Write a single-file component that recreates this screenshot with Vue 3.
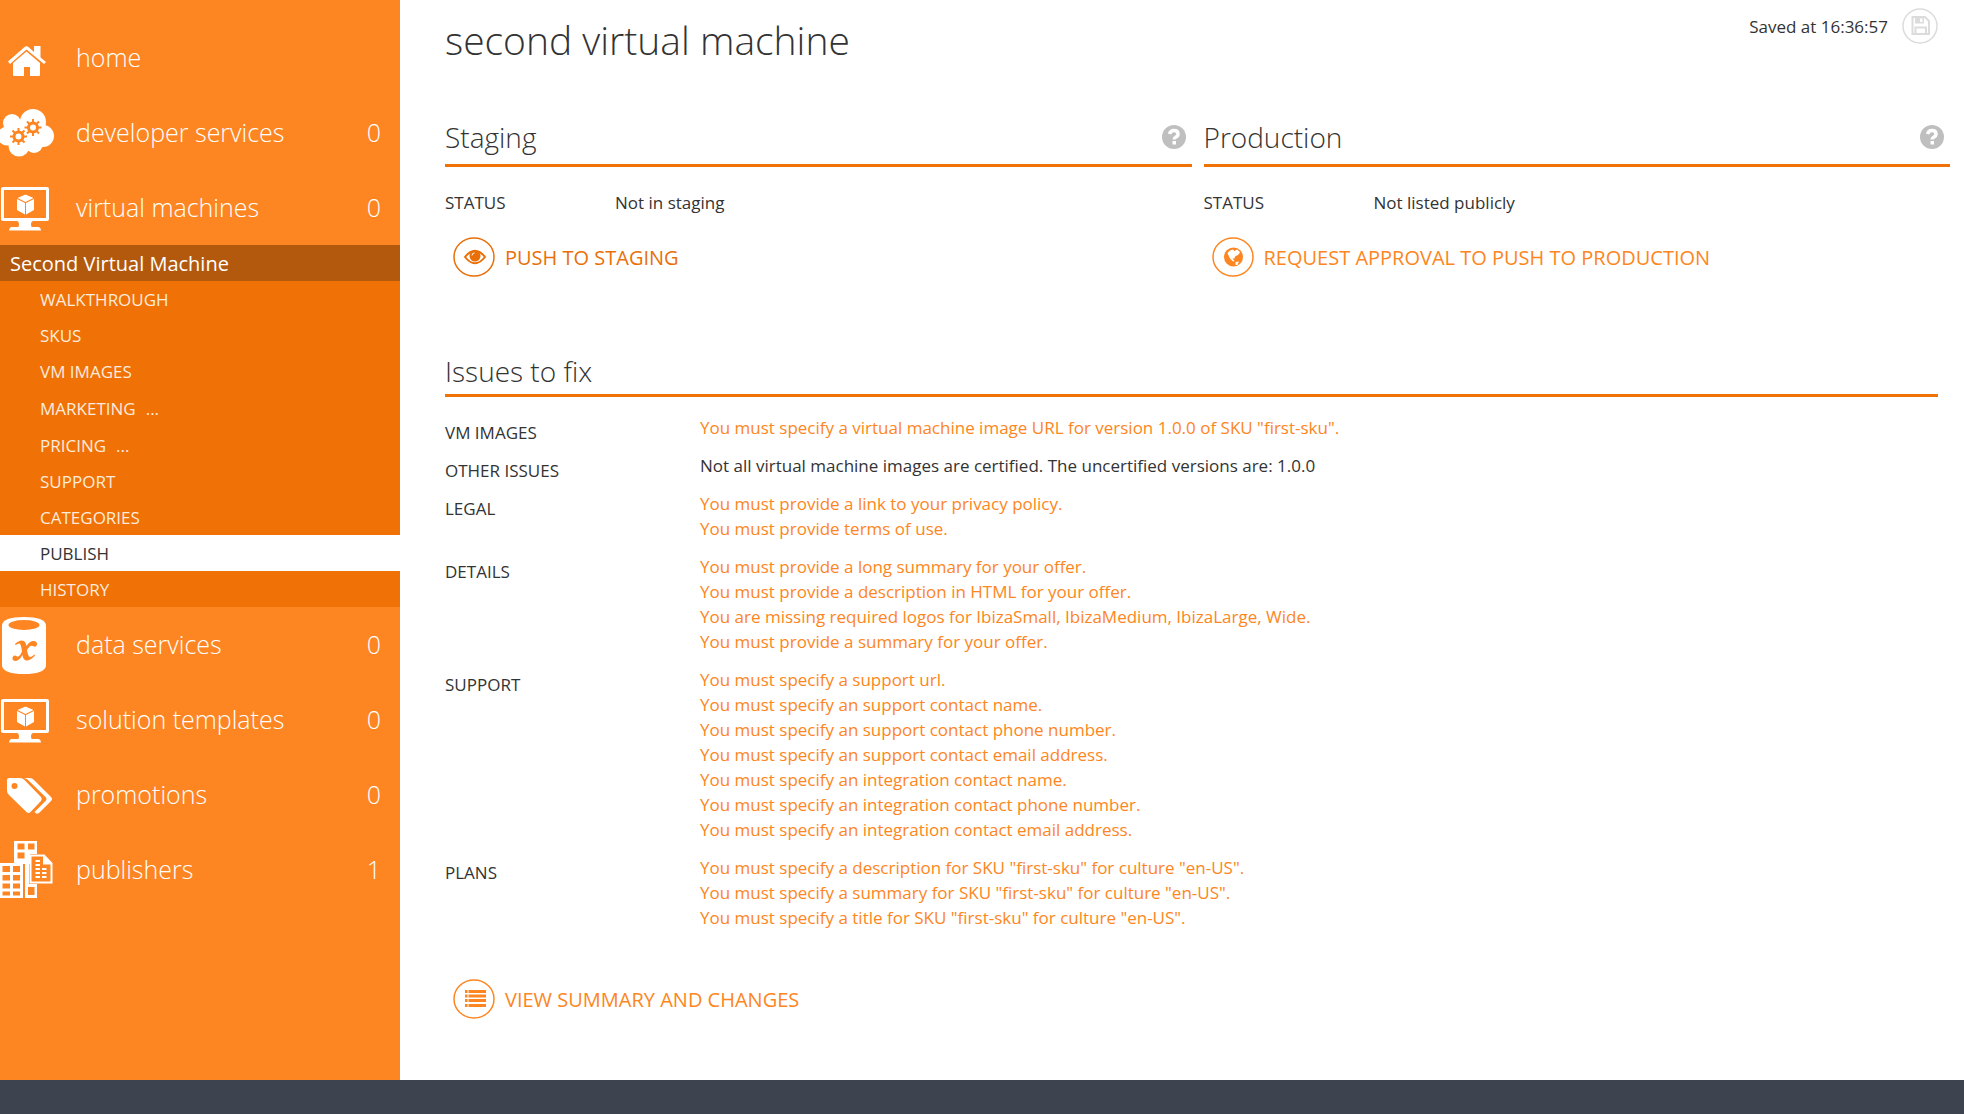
<script setup>
const before = [
  { label: 'home', icon: 'home' },
  { label: 'developer services', icon: 'cloud', count: 0 },
  { label: 'virtual machines', icon: 'monitor', count: 0 },
]
const after = [
  { label: 'data services', icon: 'data', count: 0 },
  { label: 'solution templates', icon: 'monitor', count: 0 },
  { label: 'promotions', icon: 'tags', count: 0 },
  { label: 'publishers', icon: 'publishers', count: 1 },
]
const sub = [
  { label: 'WALKTHROUGH' },
  { label: 'SKUS' },
  { label: 'VM IMAGES' },
  { label: 'MARKETING', more: true },
  { label: 'PRICING', more: true },
  { label: 'SUPPORT' },
  { label: 'CATEGORIES' },
  { label: 'PUBLISH', active: true },
  { label: 'HISTORY' },
]
const nav = [
  { key: 'top', items: before },
  { key: 'bottom', items: after },
]
const stages = [
  { title: 'Staging', status: 'Not in staging', action: 'PUSH TO STAGING', icon: 'eye', strong: true },
  { title: 'Production', status: 'Not listed publicly', action: 'REQUEST APPROVAL TO PUSH TO PRODUCTION', icon: 'globe' },
]
const issues = [
  { name: 'VM IMAGES', lines: ['You must specify a virtual machine image URL for version 1.0.0 of SKU "first-sku".'] },
  { name: 'OTHER ISSUES', plain: true, lines: ['Not all virtual machine images are certified. The uncertified versions are: 1.0.0'] },
  { name: 'LEGAL', lines: ['You must provide a link to your privacy policy.', 'You must provide terms of use.'] },
  {
    name: 'DETAILS',
    lines: [
      'You must provide a long summary for your offer.',
      'You must provide a description in HTML for your offer.',
      'You are missing required logos for IbizaSmall, IbizaMedium, IbizaLarge, Wide.',
      'You must provide a summary for your offer.',
    ],
  },
  {
    name: 'SUPPORT',
    lines: [
      'You must specify a support url.',
      'You must specify an support contact name.',
      'You must specify an support contact phone number.',
      'You must specify an support contact email address.',
      'You must specify an integration contact name.',
      'You must specify an integration contact phone number.',
      'You must specify an integration contact email address.',
    ],
  },
  {
    name: 'PLANS',
    lines: [
      'You must specify a description for SKU "first-sku" for culture "en-US".',
      'You must specify a summary for SKU "first-sku" for culture "en-US".',
      'You must specify a title for SKU "first-sku" for culture "en-US".',
    ],
  },
]
const teeth = [0, 45, 90, 135, 180, 225, 270, 315]
</script>

<template>
  <div class="page">
    <div class="body">
      <nav class="sidebar">
        <template v-for="group in nav" :key="group.key">
          <a v-for="item in group.items" :key="item.label" href="#" class="nav-item">
            <svg class="nav-icon" viewBox="0 0 56 60" aria-hidden="true">
              <g v-if="item.icon === 'home'" fill="#fff" transform="translate(0 3)">
                <path d="M26.500 20.500 L40 32 V44 Q40 45 39 45 H30 V36 H24 V45 H14 Q13 45 13 44 V32 Z" />
                <path d="M8 30.500 L24 16.500 Q26.500 14 29 16.500 L34 21 V15 H40.500 V26.500 L46 31 L44 33 L26.500 18.500 L10 33 Z" />
              </g>
              <g v-else-if="item.icon === 'cloud'" transform="translate(0 2)">
                <g fill="#fff">
                  <circle cx="12" cy="18" r="9" /><circle cx="33" cy="17" r="13" />
                  <circle cx="43" cy="31" r="11" /><circle cx="7" cy="31" r="9.500" />
                  <circle cx="19" cy="41" r="10.500" /><circle cx="34" cy="39" r="9" />
                  <rect x="10" y="18" width="30" height="22" />
                </g>
                <g v-for="g in [{ x: 18.500, y: 31.500 }, { x: 33, y: 22.500 }]" :key="g.x" :transform="`translate(${g.x} ${g.y})`">
                  <circle r="4.500" fill="none" stroke="#fd8622" stroke-width="3" />
                  <rect v-for="t in teeth" :key="t" x="-1" y="-8.500" width="2" height="4" fill="#fd8622" :transform="`rotate(${t})`" />
                </g>
              </g>
              <g v-else-if="item.icon === 'monitor'" transform="translate(0 -2)">
                <path d="M3 11 H47 Q49 11 49 13 V43 Q49 45 47 45 H33 Q30 46 31.500 51 H39 Q41 52 41 54.500 H9 Q9 52 11 51 H18.500 Q20 46 17 45 H3 Q1 45 1 43 V13 Q1 11 3 11 Z M4 14 V42 H46 V14 Z" fill="#fff" fill-rule="evenodd" />
                <path d="M25.500 18.500 L33.500 22 L25.500 26 L17.500 22 Z M17 23 L25 27 V38.500 L17 34 Z M34 23 L26 27 V38.500 L34 34 Z" fill="#fff" />
              </g>
              <g v-else-if="item.icon === 'data'" transform="translate(0 1)">
                <path d="M2 9 Q3 1 24 1 Q45 1 46 9 V50 Q44 58 24 58 Q4 58 2 50 Z" fill="#fff" />
                <ellipse cx="24" cy="9" rx="15.500" ry="5" fill="#fd8622" />
                <path d="M15 28 Q20 23 24 25 Q26 26.500 26.500 30 Q30 24.500 34 25 Q37.500 25.500 37 28.500 Q36 32 33 30 Q30 28.500 27 34 Q28 40.500 30 41 Q31.500 41 34.500 38.500 L35 39.500 Q30 45 26 44.500 Q23 43.500 22.500 39 Q19 45 15 45 Q12 44.500 12.500 41.500 Q14 38 17 40.500 Q19.500 41.500 22 35.500 Q21 28 19.500 27.500 Q18.500 27 15.500 29 Z" fill="#fd8622" />
              </g>
              <g v-else-if="item.icon === 'tags'">
                <path d="M9 13 H20 Q22.500 13 24.500 15 L41 32 Q42.500 34 41 36 L30.500 47 Q28.500 49 26.500 47 L9 30 Q7 28 7 26 V15 Q7 13 9 13 Z M14.500 18 A3 3 0 1 0 14.500 24 A3 3 0 1 0 14.500 18 Z" fill="#fff" fill-rule="evenodd" />
                <path d="M24 13 H30 Q32 13 34 15 L51 32 Q53 34 51 36 L39.500 47.500 Q37.500 49.500 35.500 48 L34.500 47 L46 35.500 Q47 34 46 32.500 L28 15 Q26.500 13.500 24 13 Z" fill="#fff" />
              </g>
              <g v-else>
                <path d="M14 1 H37 V14 H30 V24 H14 Z M17.500 3.500 V9.500 H24.500 V3.500 Z M28 3.500 V9.500 H34.500 V3.500 Z M17.500 12.500 V18.500 H24.500 V12.500 Z" fill="#fff" fill-rule="evenodd" />
                <path d="M0 23 H23 V58 H0 Z M2.500 26 V32 H10 V26 Z M13 26 V32 H20 V26 Z M2.500 35 V40.500 H10 V35 Z M13 35 V40.500 H20 V35 Z M2.500 43.500 V48.500 H10 V43.500 Z M13 43.500 V48.500 H20 V43.500 Z M2.500 51.500 V55.500 H10 V51.500 Z M13 51.500 V55.500 H20 V51.500 Z" fill="#fff" fill-rule="evenodd" />
                <path d="M25 24 H29 V44 H37 V58 H25 Z M28 47 V55 H34.500 V47 Z" fill="#fff" fill-rule="evenodd" />
                <path d="M30.500 15.500 H44 L51.500 23.500 V42.500 H30.500 Z" fill="none" stroke="#fff" stroke-width="2" />
                <path d="M43 15 V24.500 H52 Z M35.500 20 H40 V22 H35.500 Z M35.500 24 H40 V26 H35.500 Z M35.500 28 H40 V30 H35.500 Z M42 28 H46.500 V30 H42 Z M35.500 32 H40 V34 H35.500 Z M42 32 H46.500 V34 H42 Z M35.500 36 H40 V38 H35.500 Z M42 36 H46.500 V38 H42 Z" fill="#fff" />
              </g>
            </svg>
            <span class="nav-label">{{ item.label }}</span>
            <span v-if="item.count !== undefined" class="nav-count">{{ item.count }}</span>
          </a>
          <div v-if="group.key === 'top'" class="submenu">
            <a href="#" class="sub-head">Second Virtual Machine</a>
            <a v-for="s in sub" :key="s.label" href="#" class="sub-item" :class="{ active: s.active, expandable: s.more }">
              {{ s.label }}<span v-if="s.more" class="more">...</span>
            </a>
          </div>
        </template>
      </nav>

      <main class="main">
        <header class="top">
          <h1>second virtual machine</h1>
          <div class="saved">
            <span>Saved at 16:36:57</span>
            <button class="save" type="button" aria-label="Save" disabled>
              <svg width="36" height="36" viewBox="0 0 36 36" fill="none" stroke="#dcdcdc">
                <circle cx="18" cy="18" r="17" stroke-width="1.500" />
                <path d="M10.500 9 H23 L27 13 V26 H10.500 Z" stroke-width="2" />
                <path d="M13.500 26 V19.500 H24 V26" stroke-width="2" />
                <path d="M13 9 H22 V15.500 H13 Z M18 10.500 V14 H20.500 V10.500 Z" fill="#dcdcdc" stroke="none" fill-rule="evenodd" />
              </svg>
            </button>
          </div>
        </header>

        <div class="stages">
          <section v-for="st in stages" :key="st.title" class="stage">
            <div class="stage-head">
              <h2>{{ st.title }}</h2>
              <button class="help" type="button" :aria-label="`${st.title} help`">
                <svg width="24" height="24" viewBox="0 0 24 24">
                  <circle cx="12" cy="12" r="12" fill="#bfbfbf" />
                  <path d="M7.500 9 Q8.500 5.500 12 5.500 Q16 5.500 16 9 Q16 11 14 12 Q12.200 13 12.200 14.500" fill="none" stroke="#fff" stroke-width="3.500" />
                  <rect x="10.500" y="16" width="3.500" height="3.500" fill="#fff" />
                </svg>
              </button>
            </div>
            <dl class="status">
              <dt>STATUS</dt>
              <dd>{{ st.status }}</dd>
            </dl>
            <button class="action" :class="{ strong: st.strong }" type="button">
              <svg width="42" height="40" viewBox="0 0 42 40" aria-hidden="true">
                <ellipse cx="21" cy="20" rx="20" ry="19" fill="none" stroke="currentColor" stroke-width="1.500" />
                <g v-if="st.icon === 'eye'">
                  <path d="M12 20 Q22 7.500 32 20 Q22 32.500 12 20 Z" fill="none" stroke="currentColor" stroke-width="2" />
                  <circle cx="22" cy="19" r="5.500" fill="currentColor" />
                  <path d="M19 18.500 Q19 16 21.500 16" fill="none" stroke="#fff" />
                </g>
                <g v-else>
                  <circle cx="21.500" cy="20" r="9.500" fill="currentColor" />
                  <path d="M15.500 16 L18 13.500 L21 12.500 L22.500 14 L25 12.500 L28 15 L27 17 L25 18.500 L23 19.500 L22.500 21.500 L20.500 21.500 L22.500 24 L21 24.500 L18 21.500 L16.500 18.500 Z M23.500 25 L27 24.500 L25.500 28 L23.500 28 Z" fill="#fff" />
                </g>
              </svg>
              <span>{{ st.action }}</span>
            </button>
          </section>
        </div>

        <section class="issues">
          <h2>Issues to fix</h2>
          <table>
            <tbody>
              <tr v-for="row in issues" :key="row.name">
                <th scope="row">{{ row.name }}</th>
                <td>
                  <ul>
                    <li v-for="line in row.lines" :key="line">
                      <span v-if="row.plain">{{ line }}</span>
                      <a v-else href="#">{{ line }}</a>
                    </li>
                  </ul>
                </td>
              </tr>
            </tbody>
          </table>
        </section>

        <button class="action summary" type="button">
          <svg width="42" height="40" viewBox="0 0 42 40" aria-hidden="true">
            <ellipse cx="21" cy="20" rx="20" ry="19" fill="none" stroke="currentColor" stroke-width="1.500" />
            <path d="M12 11 H14.500 V14 H12 Z M15.500 11 H33 V14 H15.500 Z M12 15.500 H14.500 V18.500 H12 Z M15.500 15.500 H33 V18.500 H15.500 Z M12 20 H14.500 V23 H12 Z M15.500 20 H33 V23 H15.500 Z M12 25 H14.500 V28 H12 Z M15.500 25 H33 V28 H15.500 Z" fill="currentColor" />
          </svg>
          <span>VIEW SUMMARY AND CHANGES</span>
        </button>
      </main>
    </div>
    <footer class="footer"></footer>
  </div>
</template>

<style>
body {
  margin: 0;
}
</style>

<style scoped>
.page {
  min-height: 100vh;
  display: flex;
  flex-direction: column;
  background: #fff;
  color: #333;
  font-family: "Open Sans", "Noto Sans", sans-serif;
  font-size: 17px;
  line-height: 25px;
}
.body {
  flex: 1;
  display: flex;
}
a {
  color: inherit;
  text-decoration: none;
}
button {
  padding: 0;
  border: 0;
  background: none;
  font: inherit;
  color: inherit;
  cursor: pointer;
}
.sidebar {
  flex: none;
  width: 400px;
  padding-top: 20px;
  box-sizing: border-box;
  background: #fd8622;
  color: #fff;
}
.nav-item {
  display: flex;
  align-items: center;
  height: 75px;
  padding-right: 19px;
  font-size: 25px;
  font-weight: 300;
}
.nav-icon {
  width: 56px;
  height: 60px;
  margin-right: 20px;
}
.nav-label {
  flex: 1;
}
.submenu {
  display: flex;
  flex-direction: column;
  background: #f07105;
}
.sub-head {
  padding: 2px 0 0 10px;
  background: #b3590d;
  font-size: 20px;
  line-height: 34px;
}
.sub-item {
  padding: 2px 0 0 40px;
  color: #fdebdc;
  line-height: 34px;
}
.expandable {
  line-height: 35px;
}
.active {
  background: #fff;
  color: #333;
}
.more {
  margin-left: 10px;
}
.main {
  flex: 1;
  min-width: 0;
  padding: 8px 14px 40px 45px;
}
.top {
  display: flex;
  justify-content: space-between;
  align-items: flex-start;
}
h1,
h2 {
  margin: 0;
  font-weight: 300;
}
h1 {
  font-size: 39px;
  line-height: 64px;
}
h2 {
  font-size: 28px;
  line-height: 44px;
}
.saved {
  display: flex;
  align-items: center;
  gap: 14px;
  padding-right: 12px;
}
.save {
  height: 36px;
}
.stages {
  display: flex;
  gap: 12px;
  margin-top: 43px;
}
.stage {
  flex: 1;
}
.stage-head {
  display: flex;
  justify-content: space-between;
  align-items: center;
  height: 44px;
  padding: 0 6px 5px 0;
  border-bottom: 3px solid #f07105;
}
.help {
  height: 24px;
}
.status {
  display: flex;
  margin: 23px 0 22px;
}
.status dt {
  width: 170px;
}
.status dd {
  margin: 0;
}
.action {
  display: flex;
  align-items: center;
  gap: 10px;
  margin-left: 8px;
  color: #fd8622;
  font-size: 20px;
}
.strong {
  color: #e96f08;
}
.issues {
  margin: 72px 12px 0 0;
}
.issues h2 {
  padding-bottom: 1px;
  border-bottom: 3px solid #f07105;
}
table {
  width: 100%;
  margin-top: 18px;
  border-collapse: collapse;
}
th {
  width: 255px;
  padding: 5px 0 0;
  font-weight: 400;
  text-align: left;
  vertical-align: top;
}
td {
  padding: 0 0 13px;
}
ul {
  margin: 0;
  padding: 0;
  list-style: none;
}
td a {
  color: #fd8622;
}
.summary {
  margin-top: 36px;
}
.footer {
  height: 34px;
  background: #3d434f;
}
</style>
